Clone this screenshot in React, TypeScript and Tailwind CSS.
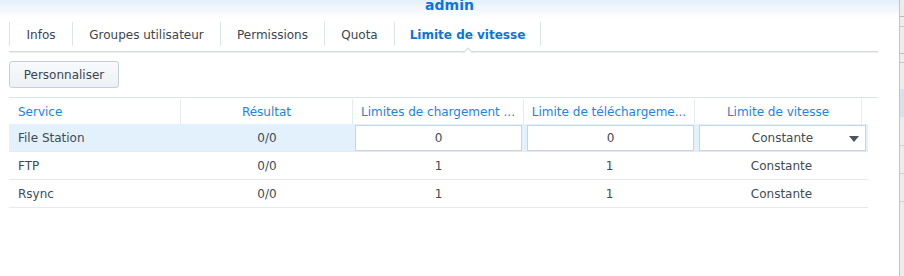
import React from 'react';

const tabs = [
  { label: 'Infos', w: 'w-[63px]' },
  { label: 'Groupes utilisateur', w: 'w-[148px]' },
  { label: 'Permissions', w: 'w-[104px]' },
  { label: 'Quota', w: 'w-[70px]' },
  { label: 'Limite de vitesse', w: 'w-[147px]', active: true },
];

const rows = [
  { service: 'File Station', result: '0/0', up: '0', down: '0', mode: 'Constante', editing: true },
  { service: 'FTP', result: '0/0', up: '1', down: '1', mode: 'Constante' },
  { service: 'Rsync', result: '0/0', up: '1', down: '1', mode: 'Constante' },
];

function TabBar() {
  return (
    <div className="relative flex h-[30px] border-b border-[#d6dadf] shadow-[0_1px_0_#eef0f2]">
      {tabs.map((t, i) => (
        <div
          key={t.label}
          className={`relative flex h-[24px] items-center justify-center border-l border-[#dde3e9] pt-px ${t.w} ${
            i === tabs.length - 1 ? 'border-r' : ''
          } ${t.active ? 'font-bold text-[#0b74de]' : 'text-[#3b4550]'}`}
        >
          {t.label}
          {t.active && (
            <span className="absolute left-1/2 top-[27px] h-[7px] w-[7px] -translate-x-1/2 rotate-45 border-l border-t border-[#d6dadf] bg-white" />
          )}
        </div>
      ))}
    </div>
  );
}

function SpeedTable() {
  return (
    <div className="mt-[9px] w-[869px]">
      {/* Header */}
      <div className="flex h-[27px] border-t border-[#dde3e9] pt-px text-[#1a84e6]">
        <div className="flex w-[172px] items-center border-r border-[#e6ebf0] pl-[9px]">Service</div>
        <div className="flex w-[172px] items-center justify-center border-r border-[#e6ebf0]">Résultat</div>
        <div className="flex w-[171px] items-center justify-center overflow-hidden whitespace-nowrap border-r border-[#e6ebf0]">
          Limites de chargement ...
        </div>
        <div className="flex w-[171px] items-center justify-center overflow-hidden whitespace-nowrap border-r border-[#e6ebf0]">
          Limite de téléchargeme...
        </div>
        <div className="flex w-[167px] items-center justify-center border-r border-[#e6ebf0]">Limite de vitesse</div>
        <div className="w-[16px]" />
      </div>

      {/* Rows */}
      {rows.map((r) => (
        <div
          key={r.service}
          className={`flex h-[28px] w-[859px] border-b border-[#e6eaee] text-[#414b55] ${r.editing ? 'bg-[#e3f1fc]' : ''}`}
        >
          <div className="flex w-[172px] items-center pl-[9px] pt-px">{r.service}</div>
          <div className="flex w-[172px] items-center justify-center pt-px">{r.result}</div>
          {r.editing ? (
            <>
              <div className="flex w-[171px] items-center px-[2px]">
                <div className="flex h-[26px] w-full items-center justify-center border border-[#c9d4df] bg-white pt-px">{r.up}</div>
              </div>
              <div className="flex w-[171px] items-center pl-[3px] pr-[1px]">
                <div className="flex h-[26px] w-full items-center justify-center border border-[#c9d4df] bg-white pt-px">{r.down}</div>
              </div>
              <div className="flex w-[173px] items-center pl-[4px] pr-[2px]">
                <div className="relative flex h-[26px] w-full items-center justify-center border border-[#c9d4df] bg-white pt-px">
                  {r.mode}
                  <svg className="absolute right-[6px] top-[10px]" width="10" height="6" viewBox="0 0 10 6">
                    <path d="M0 0 H10 L5 6 Z" fill="#4b5560" />
                  </svg>
                </div>
              </div>
            </>
          ) : (
            <>
              <div className="flex w-[171px] items-center justify-center pt-px">{r.up}</div>
              <div className="flex w-[171px] items-center justify-center pt-px">{r.down}</div>
              <div className="flex w-[173px] items-center justify-center pt-px">{r.mode}</div>
            </>
          )}
        </div>
      ))}
    </div>
  );
}

export default function App() {
  return (
    <div className="flex h-[276px] w-[904px] overflow-hidden bg-white text-[12px] font-['DejaVu_Sans',sans-serif]">
      <div className="flex w-[899px] flex-col">
        {/* Title band */}
        <div className="flex h-[18px] items-start justify-center overflow-hidden bg-gradient-to-b from-[#e3effb] to-white">
          <span className="-mt-[4px] text-[14px] font-bold leading-[18px] text-[#0b74de]">admin</span>
        </div>

        <div className="mt-[4px] pl-[9px] pr-[21px]">
          <TabBar />

          <button className="mt-[9px] flex h-[27px] w-[110px] items-center justify-center rounded-[3px] border border-[#c6cfd8] bg-gradient-to-b from-[#f8fafc] to-[#edf1f5] pt-px text-[#3b4550]">
            Personnaliser
          </button>

          <SpeedTable />
        </div>
      </div>

      {/* Window behind */}
      <div className="flex w-[5px] flex-col border-l border-[#c4c4c4] bg-[#ececec]">
        <div className="mt-[16px] h-px bg-[#b8b8b8]" />
        <div className="mt-[9px] h-px bg-[#c8c8c8]" />
        <div className="mt-[26px] h-px bg-[#bdbdbd]" />
        <div className="mt-[8px] h-px bg-[#c8c8c8]" />
        <div className="mt-[26px] h-[28px] bg-[#d4e2ef]" />
        <div className="mt-[28px] h-px bg-[#d0d0d0]" />
        <div className="mt-[27px] h-px bg-[#d0d0d0]" />
        <div className="mt-[27px] h-px bg-[#d0d0d0]" />
      </div>
    </div>
  );
}
